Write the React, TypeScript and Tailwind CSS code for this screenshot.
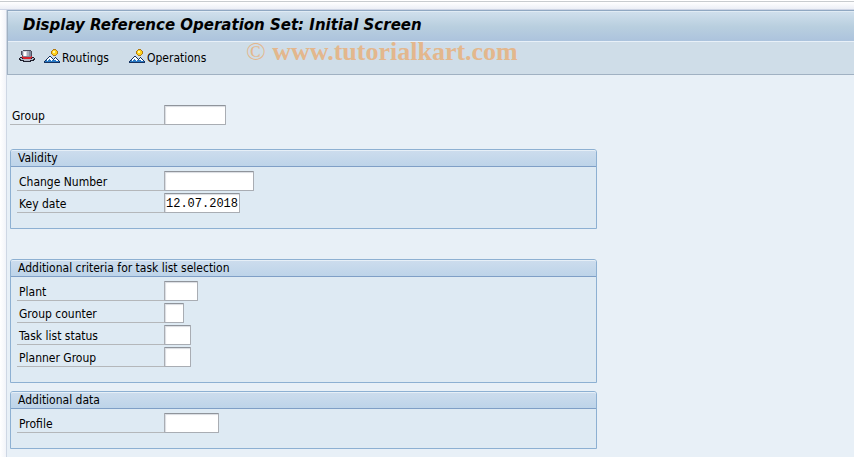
import { useState } from "react";

type Field = {
  id: string;
  label: string;
  width: string;
  value?: string;
};

const validityFields: Field[] = [
  { id: "changeNumber", label: "Change Number", width: "w-[90px]" },
  { id: "keyDate", label: "Key date", width: "w-[76px]", value: "12.07.2018" },
];

const criteriaFields: Field[] = [
  { id: "plant", label: "Plant", width: "w-[34px]" },
  { id: "groupCounter", label: "Group counter", width: "w-5" },
  { id: "taskListStatus", label: "Task list status", width: "w-[27px]" },
  { id: "plannerGroup", label: "Planner Group", width: "w-[27px]" },
];

const dataFields: Field[] = [
  { id: "profile", label: "Profile", width: "w-[55px]" },
];

function HatIcon() {
  return (
    <svg width="16" height="12" viewBox="0 0 16 12" shapeRendering="crispEdges">
      {/* brim */}
      <path d="M1 7h14v1h1v2h-1v1h-3v1H4v-1H1v-1H0V8h1z" fill="#20212e" />
      <path d="M1 8h2v1h10V8h2v1h-1v1h-3v1H5v-1H2V9H1z" fill="#b4b8c6" />
      {/* crown */}
      <path d="M4 0h8v1h1v6h-1v1H4V7H3V5H2V1h2z" fill="#4a4d5c" />
      <path d="M3 1h9v6H4V5H3z" fill="#83879a" />
      <path d="M4 1h4v5H4z" fill="#d3d6df" />
      <path d="M5 2h2v4H5z" fill="#fff" />
      <path d="M8 1h2v5H8z" fill="#a9adba" />
      {/* band */}
      <path d="M3 6h1v1h8V6h1v2h-1v1H4V8H3z" fill="#d8222c" />
    </svg>
  );
}

function MountainIcon() {
  return (
    <svg width="16" height="15" viewBox="0 0 16 15" shapeRendering="crispEdges">
      {/* sun */}
      <path d="M9 0h3v1h1v1h1v3h-1v1h-1v1H9V6H8V5H7V2h1V1h1z" fill="#b07a14" />
      <path d="M9 1h3v1h1v3h-1v1H9V5H8V2h1z" fill="#ffd21c" />
      <path d="M9 2h2v2H9z" fill="#fff6a0" />
      {/* mountains */}
      <path
        d="M5 7h2v1h1v1h1v1h1V9h1V8h1v1h1v1h1v1h1v1h1v2H0v-2h1v-1h1v-1h1V9h1V8h1z"
        fill="#16325e"
      />
      <path
        d="M5 8h2v1h1v1h1v1h1v-1h1V9h1v1h1v1h1v1h1v1H1v-1h1v-1h1v-1h1V9h1z"
        fill="#2878c4"
      />
      <path
        d="M5 8h2v1h1v1h1v1H8v1H7v-1H6v-1H5v1H4v1H3v-1H2h1v-1h1V9h1zM11 9h1v1h1v1h1v1h-2v-1h-2v-1h1z"
        fill="#fff"
      />
    </svg>
  );
}

function FieldRow({ field }: { field: Field }) {
  const [value, setValue] = useState(field.value ?? "");

  return (
    <div className="flex h-5">
      <label
        htmlFor={field.id}
        className="flex-1 border-b border-[#b4b7ba] pl-0.5 leading-[22px]"
      >
        {field.label}
      </label>
      <div className="w-[432px]">
        <input
          id={field.id}
          type="text"
          value={value}
          onChange={(e) => setValue(e.target.value)}
          className={`block h-5 rounded-[1px] border border-[#a9adb3] border-t-[#8f949b] bg-white pt-0.5 pl-px font-['Liberation_Mono',monospace] text-[12px] shadow-[inset_1px_1px_1px_#d9dce2] outline-none ${field.width}`}
        />
      </div>
    </div>
  );
}

function Panel({
  title,
  fields,
  className,
}: {
  title: string;
  fields: Field[];
  className: string;
}) {
  return (
    <section
      className={`w-[587px] rounded-t-[3px] border border-[#8db0d2] bg-[#deeaf3] ${className}`}
    >
      <h2 className="h-[17px] rounded-t-[2px] border-t border-b border-t-[#e6eff7] border-b-[#7f9fc6] bg-linear-to-b from-[#ccdced] to-[#bdd4e9] pl-[7px] leading-[15px]">
        {title}
      </h2>
      <div className="flex flex-col gap-0.5 pt-1 pl-1.5">
        {fields.map((field) => (
          <FieldRow key={field.id} field={field} />
        ))}
      </div>
    </section>
  );
}

export default function App() {
  return (
    <div className="flex min-h-screen flex-col bg-white font-['DejaVu_Sans_Condensed','DejaVu_Sans',sans-serif] text-[12px] text-black">
      {/* Window edge */}
      <div className="mt-px h-[9px] border-t border-b border-t-[#c8cccf] border-b-[#ced5e5] bg-linear-to-b from-white to-[#eceff6]" />

      <div className="flex flex-1">
        <div className="w-1.5 bg-linear-to-r from-white to-[#f2f4f9]" />
        <main className="flex-1 border-l border-[#ced7e4] bg-[#e8f0f7]">
          {/* Title bar and toolbar */}
          <header className="relative border-t border-b border-l border-t-[#90a8c2] border-b-[#a0b1c2] border-l-[#a0b1c2]">
            <h1 className="h-[31px] border-t border-b border-t-[#e0ebf4] border-b-[#e8f0f8] bg-linear-to-b from-[#cfdfec] via-[#b9cfdf] to-[#acc3dd] pl-[15px] font-['DejaVu_Sans',sans-serif] text-[15px] leading-[27px] font-bold italic">
              Display Reference Operation Set: Initial Screen
            </h1>
            <div className="flex h-8 items-start bg-[#cfdde8] pt-[7px] pl-[11px]">
              <button type="button" aria-label="Execute" className="mt-px mr-[9px]">
                <HatIcon />
              </button>
              <button type="button" className="mr-5 flex gap-0.5 leading-[18px]">
                <MountainIcon />
                Routings
              </button>
              <button type="button" className="flex gap-0.5 leading-[18px]">
                <MountainIcon />
                Operations
              </button>
            </div>
            <div className="pointer-events-none absolute top-[25px] left-[238px] font-['Liberation_Serif',serif] text-[26px] leading-8 font-bold whitespace-nowrap text-[#e3b78d]">
              <span className="font-normal">©</span> www.tutorialkart.com
            </div>
          </header>

          <form className="pt-[30px] pb-2 pl-[3px]">
            <div className="w-[586px]">
              <FieldRow
                field={{ id: "group", label: "Group", width: "w-[62px]" }}
              />
            </div>
            <Panel title="Validity" fields={validityFields} className="mt-6 pb-[15px]" />
            <Panel
              title="Additional criteria for task list selection"
              fields={criteriaFields}
              className="mt-[30px] pb-[15px]"
            />
            <Panel title="Additional data" fields={dataFields} className="mt-2 pb-[15px]" />
          </form>
        </main>
      </div>
    </div>
  );
}
